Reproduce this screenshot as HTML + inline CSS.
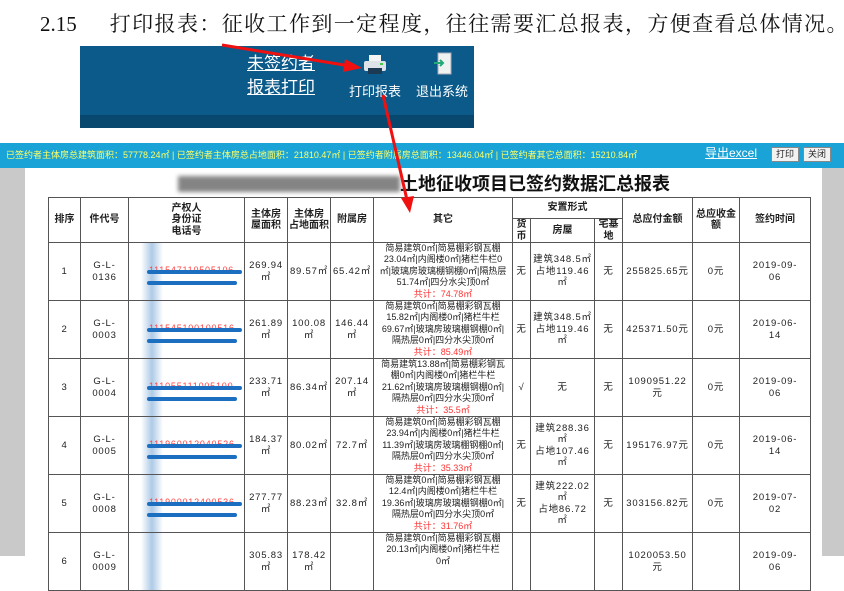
<!DOCTYPE html>
<html><head><meta charset="utf-8"><style>
*{margin:0;padding:0;box-sizing:border-box}
body{width:844px;height:556px;overflow:hidden;background:#fff;position:relative;font-family:"Liberation Sans","Noto Sans CJK SC",sans-serif}
.h{position:absolute;left:40px;top:8px;font:21px "Liberation Serif","Noto Serif CJK SC",serif;color:#111;white-space:nowrap}
.ban{position:absolute;left:80px;top:46px;width:394px;height:82px;background:#0b5a8a}
.ban .st{position:absolute;left:0;bottom:0;width:100%;height:13px;background:#08486f}
.ban a{position:absolute;color:#fff;text-decoration:underline;font-size:17px;line-height:22px}
.ban .lb{position:absolute;color:#fff;font-size:13px}
.shot{position:absolute;left:0;top:143px;width:844px;height:413px;background:#c9c9c9}
.bar{position:absolute;left:0;top:0;width:844px;height:25px;background:#1aa3d6;font-size:9px;color:#ffff66;line-height:25px;padding-left:6px;white-space:nowrap}
.page{position:absolute;left:25px;top:25px;width:797px;height:400px;background:#fff}
.btn{position:absolute;top:4px;height:15px;background:#f2f2f2;border:1px solid #888;font-size:9px;line-height:13px;padding:0 4px;color:#222}
.title{position:absolute;left:178px;top:170px;font-size:18px;font-weight:bold;color:#111;white-space:nowrap}
.title .bl{display:inline-block;width:222px;height:16px;vertical-align:-2px;background:#666;filter:blur(2px);opacity:.8}
table{position:absolute;left:48px;top:197px;border-collapse:collapse;table-layout:fixed;font-size:9.5px;color:#222;text-align:center;letter-spacing:.8px}
td,th{border:1.5px solid #555;line-height:11.5px;overflow:hidden;padding:0}
th{font-weight:bold;font-size:10px;letter-spacing:0}
tr.d td{height:58px}
.o{height:57px;overflow:hidden;font-size:9px;line-height:11.4px;letter-spacing:0;padding-top:0}
.r{color:#f33}
.nm{position:relative;text-align:left}
.blur{position:absolute;left:12px;top:0;width:22px;height:58px;background:linear-gradient(90deg,rgba(255,255,255,0),rgba(140,180,220,.7),rgba(255,255,255,0))}
.b1,.b2{position:absolute;left:18px;height:4px;background:#1c6fc0;border-radius:2px}
.b1{top:27px;width:95px}.b2{top:38px;width:90px}
.rt{position:absolute;left:20px;top:22px;font-size:9px;color:#f44}
</style></head><body>
<div class="h">2.15<span style="margin-left:33px;letter-spacing:1.4px">打印报表：征收工作到一定程度，往往需要汇总报表，方便查看总体情况。</span></div>
<div class="ban"><div class="st"></div>
<a style="left:167px;top:7px">未签约者</a><a style="left:167px;top:31px">报表打印</a>
<svg style="position:absolute;left:283px;top:8px" width="24" height="22" viewBox="0 0 24 22"><rect x="6" y="1" width="12" height="7" fill="#f4f4f4"/><rect x="1" y="7" width="22" height="10" rx="2" fill="#dde3e8"/><rect x="5" y="14" width="14" height="6" fill="#1d3a55"/><rect x="17" y="9" width="3" height="2" fill="#4c4"/></svg>
<svg style="position:absolute;left:353px;top:6px" width="20" height="24" viewBox="0 0 20 24"><rect x="5" y="1" width="13" height="21" fill="#eef2f0" stroke="#aab" stroke-width="1"/><path d="M1 11h9M7 8l3 3-3 3" stroke="#2a7" stroke-width="2" fill="none"/></svg>
<div class="lb" style="left:269px;top:35px">打印报表</div><div class="lb" style="left:336px;top:35px">退出系统</div>
</div>
<div class="shot">
<div class="bar">已签约者主体房总建筑面积：57778.24㎡ | 已签约者主体房总占地面积：21810.47㎡ | 已签约者附属房总面积：13446.04㎡ | 已签约者其它总面积：15210.84㎡</div>
<div style="position:absolute;left:705px;top:1px;color:#fff;font-size:12px;text-decoration:underline">导出excel</div>
<div class="btn" style="left:771px">打印</div><div class="btn" style="left:803px">关闭</div>
<div class="page"></div>
</div>
<div class="title"><span class="bl"></span>土地征收项目已签约数据汇总报表</div>
<table>
<colgroup><col style="width:32px"><col style="width:48px"><col style="width:116px"><col style="width:43px"><col style="width:43px"><col style="width:43px"><col style="width:139px"><col style="width:18px"><col style="width:64px"><col style="width:28px"><col style="width:70px"><col style="width:47px"><col style="width:71px"></colgroup>
<tr style="height:21px"><th rowspan="2">排序</th><th rowspan="2">件代号</th><th rowspan="2">产权人<br>身份证<br>电话号</th><th rowspan="2">主体房<br>屋面积</th><th rowspan="2">主体房<br>占地面积</th><th rowspan="2">附属房</th><th rowspan="2">其它</th><th colspan="3">安置形式</th><th rowspan="2">总应付金额</th><th rowspan="2">总应收金<br>额</th><th rowspan="2">签约时间</th></tr>
<tr style="height:22px"><th>货<br>币</th><th>房屋</th><th>宅基<br>地</th></tr>
<tr class="d"><td>1</td><td>G-L-<br>0136</td><td class="nm"><div class="blur"></div><div class="rt">111547110505106</div><div class="b1"></div><div class="b2"></div></td><td>269.94<br>㎡</td><td>89.57㎡</td><td>65.42㎡</td><td><div class="o">简易建筑0㎡|简易棚彩钢瓦棚<br>23.04㎡|内阁楼0㎡|猪栏牛栏0<br>㎡|玻璃房玻璃棚钢棚0㎡|隔热层<br>51.74㎡|四分水尖顶0㎡<br><span class="r">共计：74.78㎡</span></div></td><td>无</td><td>建筑348.5㎡<br>占地119.46<br>㎡</td><td>无</td><td>255825.65元</td><td>0元</td><td>2019-09-<br>06</td></tr>
<tr class="d"><td>2</td><td>G-L-<br>0003</td><td class="nm"><div class="blur"></div><div class="rt">111545100100516</div><div class="b1"></div><div class="b2"></div></td><td>261.89<br>㎡</td><td>100.08<br>㎡</td><td>146.44<br>㎡</td><td><div class="o">简易建筑0㎡|简易棚彩钢瓦棚<br>15.82㎡|内阁楼0㎡|猪栏牛栏<br>69.67㎡|玻璃房玻璃棚钢棚0㎡|<br>隔热层0㎡|四分水尖顶0㎡<br><span class="r">共计：85.49㎡</span></div></td><td>无</td><td>建筑348.5㎡<br>占地119.46<br>㎡</td><td>无</td><td>425371.50元</td><td>0元</td><td>2019-06-<br>14</td></tr>
<tr class="d"><td>3</td><td>G-L-<br>0004</td><td class="nm"><div class="blur"></div><div class="rt">111055111005100</div><div class="b1"></div><div class="b2"></div></td><td>233.71<br>㎡</td><td>86.34㎡</td><td>207.14<br>㎡</td><td><div class="o">简易建筑13.88㎡|简易棚彩钢瓦<br>棚0㎡|内阁楼0㎡|猪栏牛栏<br>21.62㎡|玻璃房玻璃棚钢棚0㎡|<br>隔热层0㎡|四分水尖顶0㎡<br><span class="r">共计：35.5㎡</span></div></td><td>√</td><td>无</td><td>无</td><td>1090951.22<br>元</td><td>0元</td><td>2019-09-<br>06</td></tr>
<tr class="d"><td>4</td><td>G-L-<br>0005</td><td class="nm"><div class="blur"></div><div class="rt">111960012040526</div><div class="b1"></div><div class="b2"></div></td><td>184.37<br>㎡</td><td>80.02㎡</td><td>72.7㎡</td><td><div class="o">简易建筑0㎡|简易棚彩钢瓦棚<br>23.94㎡|内阁楼0㎡|猪栏牛栏<br>11.39㎡|玻璃房玻璃棚钢棚0㎡|<br>隔热层0㎡|四分水尖顶0㎡<br><span class="r">共计：35.33㎡</span></div></td><td>无</td><td>建筑288.36<br>㎡<br>占地107.46<br>㎡</td><td>无</td><td>195176.97元</td><td>0元</td><td>2019-06-<br>14</td></tr>
<tr class="d"><td>5</td><td>G-L-<br>0008</td><td class="nm"><div class="blur"></div><div class="rt">111900012400536</div><div class="b1"></div><div class="b2"></div></td><td>277.77<br>㎡</td><td>88.23㎡</td><td>32.8㎡</td><td><div class="o">简易建筑0㎡|简易棚彩钢瓦棚<br>12.4㎡|内阁楼0㎡|猪栏牛栏<br>19.36㎡|玻璃房玻璃棚钢棚0㎡|<br>隔热层0㎡|四分水尖顶0㎡<br><span class="r">共计：31.76㎡</span></div></td><td>无</td><td>建筑222.02<br>㎡<br>占地86.72<br>㎡</td><td>无</td><td>303156.82元</td><td>0元</td><td>2019-07-<br>02</td></tr>
<tr class="d"><td>6</td><td>G-L-<br>0009</td><td class="nm"><div class="blur"></div></td><td>305.83<br>㎡</td><td>178.42<br>㎡</td><td></td><td><div class="o">简易建筑0㎡|简易棚彩钢瓦棚<br>20.13㎡|内阁楼0㎡|猪栏牛栏<br>0㎡</div></td><td></td><td></td><td></td><td>1020053.50<br>元</td><td></td><td>2019-09-<br>06</td></tr>
</table>
<svg style="position:absolute;left:0;top:0" width="844" height="556"><g stroke="#f01010" stroke-width="3" fill="#f01010"><line x1="222" y1="45" x2="350" y2="66"/><polygon points="362,68 345,59 343,72" stroke="none"/><line x1="383" y1="95" x2="407" y2="200"/><polygon points="410,213 401,198 414,196" stroke="none"/></g></svg>
</body></html>
